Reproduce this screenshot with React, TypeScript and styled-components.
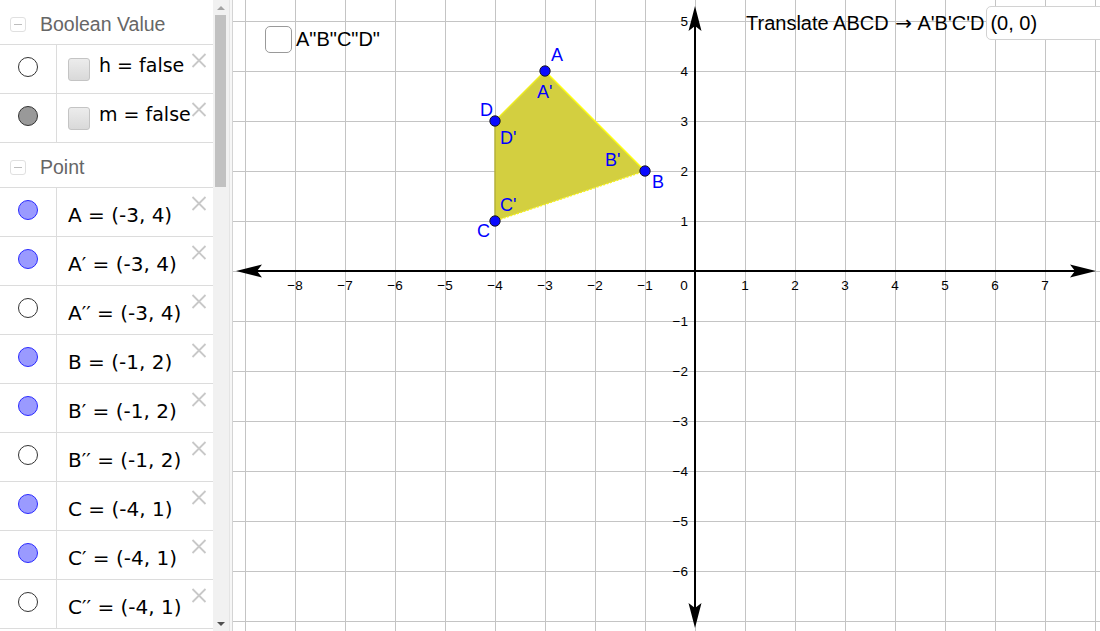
import React from "react";
import styled, { createGlobalStyle } from "styled-components";

const Global = createGlobalStyle`
  html, body { margin: 0; padding: 0; background: #fff; overflow: hidden; }
  body { font-family: "Liberation Sans", Arial, sans-serif; }
  #root { width: 1100px; height: 631px; }
`;

const Page = styled.div`
  display: flex;
  width: 1100px;
  height: 631px;
  overflow: hidden;
  background: #fff;
`;

const AlgebraPanel = styled.div`
  display: flex;
  width: 229px;
  height: 631px;
  flex-shrink: 0;
`;

const List = styled.div`
  width: 213px;
  display: flex;
  flex-direction: column;
  overflow: hidden;
`;

const Header = styled.div`
  display: flex;
  align-items: flex-start;
  flex-shrink: 0;
  box-sizing: border-box;
  height: 45px;
  padding: 17px 0 0 10px;
  border-bottom: 1px solid #dcdcdc;
`;

const Toggle = styled.span`
  width: 16px;
  height: 15px;
  box-sizing: border-box;
  border: 1px solid #e0e0e0;
  border-radius: 3px;
  display: flex;
  align-items: center;
  justify-content: center;
  margin-right: 14px;
  &::after {
    content: "";
    width: 8px;
    height: 1px;
    background: #bdbdbd;
  }
`;

const HeaderTitle = styled.span`
  font-family: "Liberation Sans", Arial, sans-serif;
  font-size: 19.5px;
  line-height: 20px;
  margin-top: -3px;
  color: #666;
`;

const Row = styled.div`
  display: grid;
  grid-template-columns: 57px 1fr;
  height: 49px;
  flex-shrink: 0;
  box-sizing: border-box;
  border-bottom: 1px solid #dcdcdc;
`;

const MarbleCell = styled.div`
  box-sizing: border-box;
  border-right: 1px solid #dcdcdc;
  display: flex;
  justify-content: center;
  padding-top: 12px;
`;

const Marble = styled.span<{ $fill: string; $stroke: string }>`
  width: 20px;
  height: 20px;
  box-sizing: border-box;
  border-radius: 50%;
  border: 1px solid ${(p) => p.$stroke};
  background: ${(p) => p.$fill};
`;

const TextCell = styled.div`
  position: relative;
  padding: 15px 0 0 11px;
  font-family: "DejaVu Sans", sans-serif;
  font-size: 20px;
  line-height: 24px;
  color: #000;
  white-space: nowrap;
`;

const BoolCell = styled.div`
  position: relative;
  display: flex;
  align-items: flex-start;
  padding: 8px 0 0 11px;
  white-space: nowrap;
`;

const BoolBox = styled.span`
  width: 22px;
  height: 23px;
  box-sizing: border-box;
  margin-top: 5px;
  margin-right: 9px;
  border: 1px solid #c4c4c4;
  border-radius: 3px;
  background: linear-gradient(#ececec, #d9d9d9);
`;

const BoolLabel = styled.span`
  font-family: "DejaVu Sans", sans-serif;
  font-size: 19px;
  line-height: 24px;
  color: #000;
`;

const DeleteIcon = styled.svg`
  position: absolute;
  top: 8px;
  right: 6px;
  width: 16px;
  height: 15px;
`;

const Scrollbar = styled.div`
  width: 16px;
  background: #f1f1f1;
  display: flex;
  flex-direction: column;
`;

const ScrollArrow = styled.div<{ $dir: "up" | "down"; $color: string }>`
  height: 15px;
  flex-shrink: 0;
  display: flex;
  align-items: center;
  justify-content: center;
  &::after {
    content: "";
    width: 0;
    height: 0;
    border-left: 4px solid transparent;
    border-right: 4px solid transparent;
    ${(p) =>
      p.$dir === "up"
        ? `border-bottom: 4px solid ${p.$color};`
        : `border-top: 4px solid ${p.$color};`}
  }
`;

const Thumb = styled.div`
  height: 172px;
  margin: 0 3px 0 2px;
  background: #c1c1c1;
  flex-shrink: 0;
`;

const ScrollSpace = styled.div`
  flex: 1;
`;

const Splitter = styled.div`
  width: 2px;
  flex-shrink: 0;
  background: #f6f6f6;
  border-left: 1px solid #e4e4e4;
`;

const Graphics = styled.div`
  position: relative;
  flex: 1;
  height: 631px;
  border-left: 1px solid #d4d4d4;
  overflow: hidden;
`;

const Canvas = styled.svg`
  display: block;
`;

const CheckOverlay = styled.div`
  position: absolute;
  left: 32px;
  top: 26px;
  display: flex;
  align-items: center;
`;

const CheckBox = styled.span`
  width: 27px;
  height: 27px;
  box-sizing: border-box;
  border: 1.5px solid #9a9a9a;
  border-radius: 5px;
  background: #fff;
  margin-right: 4px;
`;

const OverlayText = styled.span`
  font-family: "Liberation Sans", Arial, sans-serif;
  font-size: 20px;
  line-height: 23px;
  color: #000;
  white-space: nowrap;
`;

const Arrow = styled.span`
  font-family: "DejaVu Sans", sans-serif;
  font-size: 20px;
  margin: 0 1px;
`;

const TranslateOverlay = styled.div`
  position: absolute;
  left: 513px;
  top: 6px;
  display: flex;
  align-items: center;
`;

const InputBox = styled.div`
  height: 34px;
  width: 140px;
  box-sizing: border-box;
  margin-left: 2px;
  padding-left: 3px;
  border: 1px solid #d2d2d2;
  border-radius: 5px;
  background: #fff;
  display: flex;
  align-items: center;
  font-family: "Liberation Sans", Arial, sans-serif;
  font-size: 20px;
  color: #000;
`;

type MarbleKind = "empty" | "grey" | "blue";
const marbleColors: Record<MarbleKind, { fill: string; stroke: string }> = {
  empty: { fill: "#fff", stroke: "#333" },
  grey: { fill: "#999", stroke: "#333" },
  blue: { fill: "#9a9aff", stroke: "#2a2aff" },
};

const Delete = () => (
  <DeleteIcon viewBox="0 0 16 15">
    <path d="M1.5 1 L14.5 14 M14.5 1 L1.5 14" stroke="#c8c8c8" strokeWidth="1.8" fill="none" />
  </DeleteIcon>
);

const MarbleOf = ({ kind }: { kind: MarbleKind }) => (
  <Marble $fill={marbleColors[kind].fill} $stroke={marbleColors[kind].stroke} />
);

const bools: { name: string; kind: MarbleKind }[] = [
  { name: "h", kind: "empty" },
  { name: "m", kind: "grey" },
];

const points: { name: string; value: string; kind: MarbleKind }[] = [
  { name: "A", value: "(-3, 4)", kind: "blue" },
  { name: "A′", value: "(-3, 4)", kind: "blue" },
  { name: "A′′", value: "(-3, 4)", kind: "empty" },
  { name: "B", value: "(-1, 2)", kind: "blue" },
  { name: "B′", value: "(-1, 2)", kind: "blue" },
  { name: "B′′", value: "(-1, 2)", kind: "empty" },
  { name: "C", value: "(-4, 1)", kind: "blue" },
  { name: "C′", value: "(-4, 1)", kind: "blue" },
  { name: "C′′", value: "(-4, 1)", kind: "empty" },
];

const OX = 695;
const OY = 271;
const U = 50;

const GridAndAxes = () => {
  const vx: number[] = [];
  for (let x = 245; x <= 1100; x += U) vx.push(x);
  const hy: number[] = [];
  for (let y = 21; y <= 631; y += U) hy.push(y);
  const xl: number[] = [];
  for (let k = -8; k <= 7; k++) if (k !== 0) xl.push(k);
  const yl: number[] = [5, 4, 3, 2, 1, -1, -2, -3, -4, -5, -6];
  const fmt = (n: number) => (n < 0 ? `\u2212${-n}` : `${n}`);
  return (
    <g>
      <g stroke="#c4c4c4" strokeWidth="1" shapeRendering="crispEdges">
        {vx.map((x) => (
          <line key={`v${x}`} x1={x + 0.5} y1={0} x2={x + 0.5} y2={631} />
        ))}
        {hy.map((y) => (
          <line key={`h${y}`} x1={233} y1={y + 0.5} x2={1100} y2={y + 0.5} />
        ))}
      </g>
      <g stroke="#000" strokeWidth="2">
        <line x1={240} y1={OY} x2={1088} y2={OY} />
        <line x1={OX} y1={12} x2={OX} y2={620} />
      </g>
      <g fill="#000">
        <path d="M1096 271 L1070 264.5 L1075 271 L1070 277.5 Z" />
        <path d="M236 271 L262 264.5 L257 271 L262 277.5 Z" />
        <path d="M695 6 L688.5 31 L695 26 L701.5 31 Z" />
        <path d="M695 628 L688.5 603 L695 608 L701.5 603 Z" />
      </g>
      <g fontFamily="Liberation Sans, Arial, sans-serif" fontSize="13.5" fill="#000">
        {xl.map((k) => (
          <text key={`xl${k}`} x={OX + k * U} y={290} textAnchor="middle">
            {fmt(k)}
          </text>
        ))}
        <text x={684} y={290} textAnchor="middle">
          0
        </text>
        {yl.map((k) => (
          <text key={`yl${k}`} x={688} y={OY - k * U + 5} textAnchor="end">
            {fmt(k)}
          </text>
        ))}
      </g>
    </g>
  );
};

const P = {
  A: [545, 71],
  B: [645, 171],
  C: [495, 221],
  D: [495, 121],
};

const labels: { t: string; x: number; y: number }[] = [
  { t: "A", x: 551, y: 61 },
  { t: "A'", x: 537, y: 98 },
  { t: "D", x: 480, y: 116 },
  { t: "D'", x: 500, y: 144 },
  { t: "B'", x: 605, y: 166 },
  { t: "B", x: 652, y: 188 },
  { t: "C'", x: 500, y: 211 },
  { t: "C", x: 477, y: 237 },
];

const Figure = () => (
  <g>
    <polygon
      points={`${P.A.join(",")} ${P.B.join(",")} ${P.C.join(",")} ${P.D.join(",")}`}
      fill="#d3cf40"
    />
    <line x1={P.D[0]} y1={P.D[1]} x2={P.A[0]} y2={P.A[1]} stroke="#eeec20" strokeWidth="1.5" />
    <line x1={P.A[0]} y1={P.A[1]} x2={P.B[0]} y2={P.B[1]} stroke="#ffff10" strokeWidth="1.5" />
    <line
      x1={P.B[0]}
      y1={P.B[1]}
      x2={P.C[0]}
      y2={P.C[1]}
      stroke="#f4f020"
      strokeWidth="1.5"
      strokeDasharray="2 1.5"
    />
    <line x1={P.C[0]} y1={P.C[1]} x2={P.D[0]} y2={P.D[1]} stroke="#b4b03a" strokeWidth="1.5" />
    {Object.entries(P).map(([k, [x, y]]) => (
      <circle key={k} cx={x} cy={y} r={5.2} fill="#0a0aff" stroke="#111" strokeWidth="0.9" />
    ))}
    <g fontFamily="Liberation Sans, Arial, sans-serif" fontSize="18" fill="#0000ff">
      {labels.map((l) => (
        <text key={l.t} x={l.x} y={l.y}>
          {l.t}
        </text>
      ))}
    </g>
  </g>
);

export default function App() {
  return (
    <>
      <Global />
      <Page>
        <AlgebraPanel>
          <List>
            <Header>
              <Toggle />
              <HeaderTitle>Boolean Value</HeaderTitle>
            </Header>
            {bools.map((b) => (
              <Row key={b.name}>
                <MarbleCell>
                  <MarbleOf kind={b.kind} />
                </MarbleCell>
                <BoolCell>
                  <BoolBox />
                  <BoolLabel>{b.name} = false</BoolLabel>
                  <Delete />
                </BoolCell>
              </Row>
            ))}
            <Header>
              <Toggle />
              <HeaderTitle>Point</HeaderTitle>
            </Header>
            {points.map((p) => (
              <Row key={p.name}>
                <MarbleCell>
                  <MarbleOf kind={p.kind} />
                </MarbleCell>
                <TextCell>
                  {p.name} = {p.value}
                  <Delete />
                </TextCell>
              </Row>
            ))}
          </List>
          <Scrollbar>
            <ScrollArrow $dir="up" $color="#a3a3a3" />
            <Thumb />
            <ScrollSpace />
            <ScrollArrow $dir="down" $color="#505050" />
          </Scrollbar>
        </AlgebraPanel>
        <Splitter />
        <Graphics>
          <Canvas width={867} height={631} viewBox="233 0 867 631">
            <GridAndAxes />
            <Figure />
          </Canvas>
          <CheckOverlay>
            <CheckBox />
            <OverlayText>A"B"C"D"</OverlayText>
          </CheckOverlay>
          <TranslateOverlay>
            <OverlayText>
              Translate ABCD <Arrow>→</Arrow> A'B'C'D
            </OverlayText>
            <InputBox>(0, 0)</InputBox>
          </TranslateOverlay>
        </Graphics>
      </Page>
    </>
  );
}
